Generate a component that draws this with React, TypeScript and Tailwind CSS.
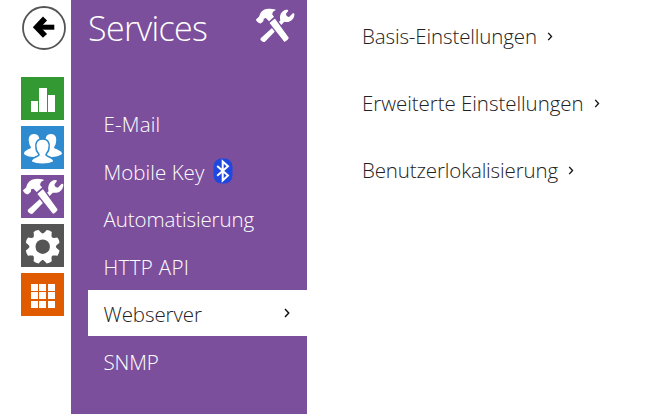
import React from 'react';

const services = [
  { label: 'E-Mail', spacing: 'tracking-[0.2px]' },
  { label: 'Mobile Key', spacing: 'tracking-[0.05px]', bluetooth: true },
  { label: 'Automatisierung', spacing: 'tracking-[-0.1px]' },
  { label: 'HTTP API', spacing: 'tracking-[0.35px]' },
  { label: 'Webserver', spacing: 'tracking-[-0.1px]', active: true },
  { label: 'SNMP', spacing: 'tracking-[-0.1px]' },
];

const settings = [
  { label: 'Basis-Einstellungen', spacing: 'tracking-[-0.12px]' },
  { label: 'Erweiterte Einstellungen', spacing: 'tracking-[-0.05px]' },
  { label: 'Benutzerlokalisierung', spacing: 'tracking-[-0.14px]' },
];

const ToolsIcon = ({ className }: { className: string }) => (
  <svg viewBox="0 0 120 104" className={className} fill="#fff">
    {/* wrench */}
    <path d="M17 90 L76 37 C72 22 79 8 93 5 C98 4 101 6 99 9 L93 17 C92 22 98 28 103 26 L112 17 C116 14 119 16 118 21 C116 36 102 44 88 41 L30 101 C26 104 13 96 17 90 Z" />
    {/* hammer */}
    <g stroke="#7c4f9c" strokeWidth="4">
      <path d="M41 44 L60 28 L104 89 C102 95 96 101 88 104 Z" />
      <path d="M0 34 L10 25 C13 12 22 2 37 0 C48 -1 60 0 69 5 C59 8 53 13 54 19 L60 26 L42 42 L32 32 L28 33 L27 40 L18 48 C12 48 4 42 0 34 Z" />
    </g>
  </svg>
);

const Chevron = ({ className }: { className: string }) => (
  <svg viewBox="0 0 6 10" className={className} fill="none" stroke="#111">
    <path d="M1 1 L4.7 5 L1 9" strokeWidth="1.5" />
  </svg>
);

const BluetoothIcon = () => (
  <svg viewBox="0 0 20 26" className="mb-0.5 ml-[9px] h-[26px] w-5">
    <rect x="0.5" y="0.5" width="19" height="25" rx="8" fill="#1f48e0" />
    <path d="M4.2 8 L15 17.5 L9.7 22.5 V3.5 L15 8.2 L4.2 17.8" fill="none" stroke="#fff" strokeWidth="2" />
  </svg>
);

const UsersIcon = () => (
  <svg viewBox="0 0 43 43" className="size-full">
    <g fill="#fff">
      <path d="M13 8 C18 8 19 12 18 17 L16 23 L19 30 C13 32 6 31 3 28 C3 25 6 24 10 22 C10 20 8 19 8 16 C7 11 9 8 13 8 Z" />
      <path d="M30 8 C25 8 24 12 25 17 L27 23 L24 30 C30 32 37 31 41 28 C41 25 37 24 33 22 C33 20 35 19 35 16 C36 11 34 8 30 8 Z" />
      <path
        d="M21.5 13 C27 13 29 17 28 22 C28 26 25 27 25 29 C28 32 33 31 33 36 C27 39 16 39 10 36 C10 31 15 32 18 29 C18 27 15 26 15 22 C14 17 16 13 21.5 13 Z"
        stroke="#2e8bd0"
        strokeWidth="1.6"
      />
    </g>
  </svg>
);

const GearIcon = () => (
  <svg viewBox="-21.7 -22.7 43 43" className="size-full">
    <g fill="#fff">
      <circle r="13" />
      {[22.5, 67.5, 112.5, 157.5, 202.5, 247.5, 292.5, 337.5].map((angle) => (
        <path key={angle} d="M-5.4 -11.5 C-3.8 -13 -3.4 -15 -2.8 -17 Q0 -18 2.8 -17 C3.4 -15 3.8 -13 5.4 -11.5 Z" transform={`rotate(${angle})`} />
      ))}
    </g>
    <circle r="7.2" fill="#555" />
  </svg>
);

export default function App() {
  return (
    <div className="flex h-[414px] w-[645px] overflow-hidden bg-white font-['Open_Sans','Noto_Sans',sans-serif] text-[20.5px] font-light">
      <nav className="flex w-[71px] shrink-0 flex-col pl-[21px]">
        <button className="mt-[5px] size-[46px]">
          <svg viewBox="0 0 46 46" className="size-full" fill="none">
            <circle cx="23" cy="23" r="21" stroke="#555" strokeWidth="1.8" />
            <path d="M33.3 22.2 H16" stroke="#000" strokeWidth="5" />
            <path d="M24 13.5 L15.7 22.2 L24 30.9" stroke="#000" strokeWidth="5.6" />
          </svg>
        </button>
        <div className="mt-[26px] flex flex-col gap-1.5">
          <div className="size-[43px] bg-[#339933]">
            <svg viewBox="0 0 43 43" className="size-full" fill="#fff">
              <path d="M10 24h7v11h-7z M18 11h8v24h-8z M27 18h7v17h-7z" />
            </svg>
          </div>
          <div className="size-[43px] bg-[#2e8bd0]">
            <UsersIcon />
          </div>
          <div className="flex size-[43px] items-center justify-center bg-[#7c4f9c]">
            <ToolsIcon className="h-[37px] w-[42px]" />
          </div>
          <div className="size-[43px] bg-[#555]">
            <GearIcon />
          </div>
          <div className="size-[43px] bg-[#e05a00]">
            <svg viewBox="0 0 43 43" className="size-full" fill="#fff">
              {[11, 19, 28].map((y) =>
                [10, 18, 27].map((x) => <rect key={`${x}-${y}`} x={x} y={y} width="7" height="7" />)
              )}
            </svg>
          </div>
        </div>
      </nav>

      <aside className="w-[236px] shrink-0 bg-[#7c4f9c] text-white">
        <header className="flex h-[100px] items-start justify-between pl-[17px] pr-3 pt-2">
          <h1 className="text-[34px] leading-10 tracking-[-0.65px]">Services</h1>
          <ToolsIcon className="h-[35px] w-10" />
        </header>
        <ul className="flex flex-col gap-[1.5px] pl-[17px]">
          {services.map(({ label, spacing, bluetooth, active }) => (
            <li
              key={label}
              className={`flex h-[46px] items-center justify-between pl-[15.5px] pr-[17px] ${active ? 'bg-white text-[#222]' : ''}`}
            >
              <span className="flex items-center pt-0.5">
                <span className={`pt-px ${spacing}`}>{label}</span>
                {bluetooth && <BluetoothIcon />}
              </span>
              {active && <Chevron className="h-2.5 w-1.5" />}
            </li>
          ))}
        </ul>
      </aside>

      <main className="flex flex-col gap-[37px] pl-[55px] pt-[21px] text-[#222]">
        {settings.map(({ label, spacing }) => (
          <a key={label} className="flex h-[30px] items-center gap-[10px]">
            <span className={spacing}>{label}</span>
            <Chevron className="h-[9px] w-[6px]" />
          </a>
        ))}
      </main>
    </div>
  );
}
